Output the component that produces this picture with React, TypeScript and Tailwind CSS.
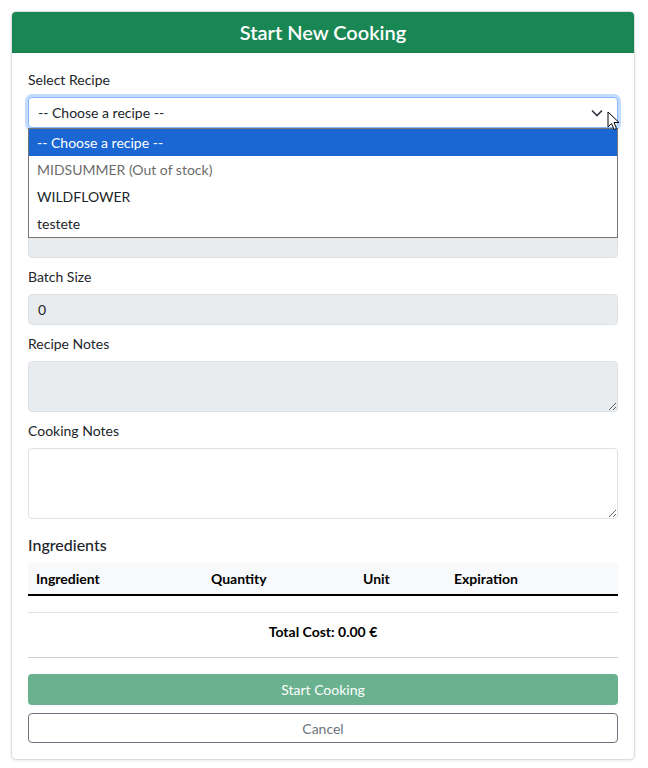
import React from 'react';

const FONT = { fontFamily: '"Segoe UI", Lato, "Noto Sans", "Liberation Sans", sans-serif' };

const RECIPES = [
  { name: '-- Choose a recipe --', active: true },
  { name: 'MIDSUMMER (Out of stock)', disabled: true },
  { name: 'WILDFLOWER' },
  { name: 'testete' },
];

function Label({ children }: { children?: React.ReactNode }) {
  return <div className="mb-2 h-5 pt-px text-[14px] leading-5 text-[#212529]">{children}</div>;
}

function Cursor() {
  return (
    <svg className="absolute left-[579px] top-[14px] z-20" width="13" height="20" viewBox="0 0 13 20">
      <path d="M1 1 L1 16 L4.5 12.5 L7 18.5 L9.5 17.5 L7 11.5 L12 11.5 Z" fill="#fff" stroke="#000" strokeWidth="1" strokeLinejoin="round" />
    </svg>
  );
}

export default function App() {
  return (
    <div className="min-h-screen bg-white pt-[11px]" style={FONT}>
      <div className="ml-[11px] w-[624px] rounded-[5px] border border-[#dcdcdc] shadow-[0_1px_3px_rgba(0,0,0,0.08)]">
        {/* header */}
        <div className="flex h-[41px] items-center justify-center rounded-t-[4px] border-b border-[#167a4b] bg-[#198754]">
          <h4 className="text-[20px] font-semibold leading-6 text-white">Start New Cooking</h4>
        </div>

        <div className="flex flex-col p-4">
          {/* Select recipe + open dropdown */}
          <div className="mb-2">
            <Label>Select Recipe</Label>
            <div className="relative">
              <div className="flex h-[31px] items-center justify-between rounded-[4px] border border-[#86b7fe] bg-white pl-[9px] pr-[14px] text-[14px] text-[#212529] shadow-[0_0_0_3px_rgba(13,110,253,0.25)]">
                <span>-- Choose a recipe --</span>
                <svg width="12" height="8" viewBox="0 0 12 8">
                  <path d="M1 1.5 L6 6.5 L11 1.5" fill="none" stroke="#343a40" strokeWidth="1.6" />
                </svg>
              </div>
              <Cursor />
              <div className="absolute left-0 right-0 top-[31px] z-10 border border-[#767676] bg-white">
                {RECIPES.map((r) => (
                  <div
                    key={r.name}
                    className={`flex h-[27px] items-center pl-[8px] text-[14px] ${
                      r.active ? 'bg-[#1a67d4] text-white' : r.disabled ? 'text-[#6d6d6d]' : 'text-[#212529]'
                    }`}
                  >
                    {r.name}
                  </div>
                ))}
              </div>
            </div>
          </div>

          {/* fields covered by the open dropdown */}
          <div className="mb-2">
            <Label />
            <div className="h-[31px] rounded-[4px] border border-[#dee2e6] bg-[#e9ecef]" />
          </div>
          <div className="mb-2">
            <Label />
            <div className="h-[27px] rounded-[4px] border border-[#dee2e6] bg-[#e9ecef]" />
          </div>

          <div className="mb-2">
            <Label>Batch Size</Label>
            <div className="flex h-[31px] items-center rounded-[4px] border border-[#dee2e6] bg-[#e9ecef] pl-[9px] text-[14px] text-[#212529]">
              0
            </div>
          </div>

          <div className="mb-2">
            <Label>Recipe Notes</Label>
            <textarea disabled className="block h-[51px] w-full rounded-[4px] border border-[#dee2e6] bg-[#e9ecef]" />
          </div>

          <div>
            <Label>Cooking Notes</Label>
            <textarea className="block h-[71px] w-full rounded-[4px] border border-[#dee2e6] bg-white" />
          </div>

          <h5 className="mb-2 mt-4 h-5 text-[16px] font-medium leading-5 text-[#212529]">Ingredients</h5>

          <div className="grid h-[33px] grid-cols-[175px_152px_91px_172px] items-center border-b-2 border-black bg-[#f8f9fa] text-[14px] font-bold text-black">
            <div className="pl-2">Ingredient</div>
            <div className="pl-2">Quantity</div>
            <div className="pl-2">Unit</div>
            <div className="pl-2">Expiration</div>
          </div>

          <div className="mt-4 border-t border-[#e3e3e3] pb-[15px] pt-2 text-center text-[14px] font-bold leading-[21px] text-black">
            Total Cost: 0.00 €
          </div>
          <div className="border-t border-[#cfcfcf]" />

          <button disabled className="mt-4 h-[31px] rounded-[4px] bg-[#69b18f] text-[14px] text-white">
            Start Cooking
          </button>
          <button className="mt-2 h-[30px] rounded-[4px] border border-[#6c757d] bg-white text-[14px] text-[#6c757d]">
            Cancel
          </button>
        </div>
      </div>
    </div>
  );
}
